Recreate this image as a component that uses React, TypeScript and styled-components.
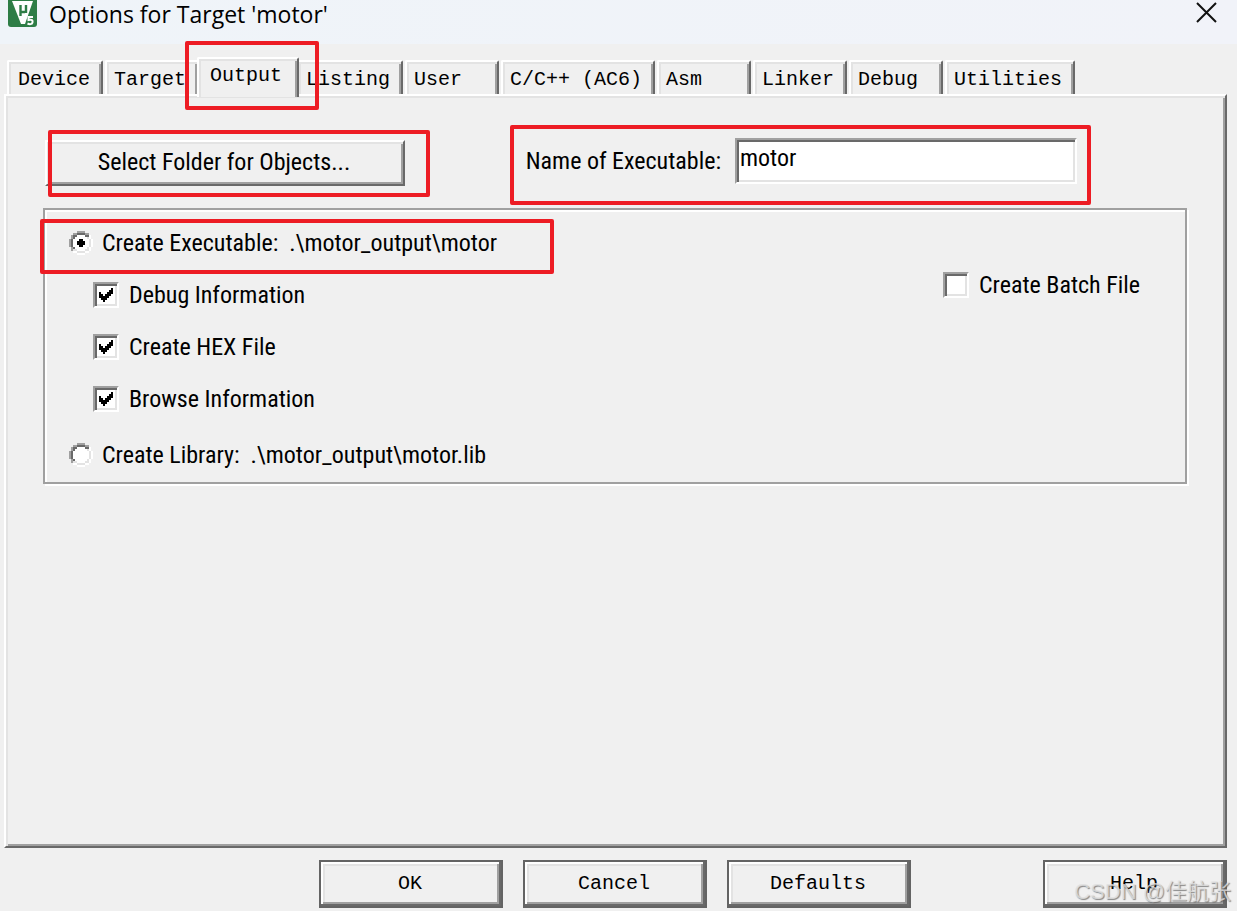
import React, { useId, useState } from "react";
import styled, { createGlobalStyle, css } from "styled-components";

const face = "#f0f0f0";
const white = "#ffffff";
const light = "#e3e3e3";
const mid = "#a0a0a0";
const dark = "#696969";
const red = "#ed1c24";

const GlobalStyle = createGlobalStyle`
  *, *::before, *::after { box-sizing: border-box; }
  body { margin: 0; background: ${face}; color: #000; }
  button, input { font: inherit; color: inherit; border-radius: 0; margin: 0; }
`;

const dialogFont = css`
  font-family: "Roboto Condensed", "Liberation Sans", sans-serif;
  font-size: 24px;
  line-height: 28px;
`;

const monoFont = css`
  font-family: "Liberation Mono", "Noto Sans CJK SC", monospace;
  font-size: 20px;
  line-height: 24px;
`;

const raised = css`
  border: 2px solid;
  border-color: ${white} ${dark} ${dark} ${white};
  box-shadow: inset 2px 2px 0 ${light}, inset -2px -2px 0 ${mid};
`;

const sunken = css`
  border: 2px solid;
  border-color: ${mid} ${white} ${white} ${mid};
  box-shadow: inset 2px 2px 0 ${dark}, inset -2px -2px 0 ${light};
`;

const Window = styled.div`
  position: relative;
  display: flex;
  flex-direction: column;
  min-height: 100vh;
  background: ${face};
`;

const TitleBar = styled.header`
  display: flex;
  align-items: flex-start;
  height: 44px;
  padding: 0 20px 0 8px;
  background: linear-gradient(90deg, #eff4f9, #f1f3f9);
`;

const Title = styled.h1`
  flex: 1;
  margin: 0 0 0 12px;
  font: 400 23px/28px "Open Sans", "Noto Sans", sans-serif;
`;

const CloseButton = styled.button`
  display: flex;
  padding: 2px 0 0;
  border: 0;
  background: none;
`;

const Tabs = styled.div`
  display: flex;
  align-items: flex-end;
  gap: 2px;
  height: 50px;
  padding: 0 7px;
`;

const Tab = styled.button<{ $active?: boolean }>`
  ${monoFont}
  flex: none;
  position: relative;
  min-width: 94px;
  height: 34px;
  padding: 4px 11px 0 7px;
  border: 2px solid;
  border-color: ${white} ${dark} transparent ${white};
  border-bottom: 0;
  border-radius: 2px 2px 0 0;
  background: ${face};
  box-shadow: inset 2px 2px 0 ${light}, inset -2px 0 0 ${mid};
  text-align: left;
  white-space: nowrap;

  &:first-child {
    min-width: 96px;
    padding-left: 9px;
  }

  ${({ $active }) =>
    $active &&
    css`
      z-index: 1;
      min-width: 102px;
      height: 40px;
      margin: 0 -4px -3px;
      padding: 0 13px 5px 11px;
    `}
`;

const Highlight = styled.span<{ $inset: string }>`
  position: absolute;
  z-index: 2;
  inset: ${({ $inset }) => $inset};
  border: 4px solid ${red};
  border-radius: 2px;
  pointer-events: none;
`;

const Panel = styled.main`
  ${dialogFont}
  ${raised}
  flex: 1;
  margin: 0 10px 0 4px;
  padding: 42px 38px 40px 37px;
`;

const TopRow = styled.div`
  display: flex;
  align-items: flex-start;
  justify-content: space-between;
  margin-right: 110px;
  margin-left: 2px;
`;

const FolderButton = styled.button`
  ${raised}
  position: relative;
  width: 360px;
  height: 46px;
  margin-top: 2px;
  padding: 0 2px 2px 0;
  background: ${face};
`;

const Field = styled.div`
  position: relative;
  display: flex;
  align-items: center;
  gap: 14px;
`;

const TextInput = styled.input`
  ${sunken}
  width: 342px;
  height: 46px;
  padding: 0 3px 6px;
  background-color: ${white};
  outline: none;
`;

const Group = styled.fieldset`
  display: flex;
  justify-content: space-between;
  min-width: 0;
  margin: 22px 0 0;
  padding: 19px 45px 13px 24px;
  border: 2px solid ${mid};
  box-shadow: 2px 2px 0 ${white}, inset 2px 2px 0 ${white};
`;

const OptionList = styled.div`
  display: flex;
  flex-direction: column;
`;

const SubOptions = styled.div`
  display: flex;
  flex-direction: column;
  gap: 24px;
  padding: 24px 24px 28px;
`;

const BatchOption = styled.div`
  padding-top: 42px;
`;

const Choice = styled.label<{ $gap: number }>`
  position: relative;
  display: flex;
  align-items: center;
  gap: ${({ $gap }) => $gap}px;
  height: 28px;
  white-space: pre;
`;

const Mark = styled.span`
  position: relative;
  display: flex;
  flex: none;

  svg {
    position: absolute;
    inset: 0;
    pointer-events: none;
  }
`;

const CheckInput = styled.input`
  ${sunken}
  appearance: none;
  width: 26px;
  height: 26px;
  background: ${white};
`;

const RadioInput = styled.input`
  appearance: none;
  width: 24px;
  height: 24px;
`;

const Footer = styled.footer`
  display: flex;
  gap: 20px;
  padding: 12px 10px 3px 319px;
`;

const DialogButton = styled.button`
  ${monoFont}
  width: 184px;
  height: 48px;
  padding: 0 2px 0 0;
  border: 2px solid #646464;
  background: ${face};
  box-shadow: inset -2px -2px 0 ${dark}, inset 2px 2px 0 ${white},
    inset -4px -4px 0 ${mid}, inset 4px 4px 0 ${light};

  &:last-child {
    margin-left: auto;
  }
`;

const Watermark = styled.span`
  position: absolute;
  right: 6px;
  bottom: 2px;
  font: 400 22px/34px "Liberation Sans", "Noto Sans CJK SC", sans-serif;
  color: rgba(225, 225, 225, 0.8);
  text-shadow: 1px 1px 1px rgba(90, 90, 90, 0.7);
  pointer-events: none;
`;

const AppIcon = () => (
  <svg width="29" height="28" viewBox="0 0 29 28" aria-hidden="true">
    <rect y="-4" width="29" height="31" rx="3" fill="#2e7d46" />
    <path d="M4 1H25L17 24H13Z" fill="#fff" />
    <path d="M12.500 5V16M12.500 12H17M18 5V13" stroke="#2e7d46" strokeWidth="2.400" fill="none" />
    <path d="M25 17H20.500V20C24 19 25 20.500 24.500 22.500C24 24.500 21.500 24.500 19.500 23.500" stroke="#fff" strokeWidth="2" fill="none" />
  </svg>
);

const radioRows = [
  "....AAAA....",
  "..AADDDDAA..",
  ".ADDWWWWDDW.",
  ".ADWWWWWWEW.",
  "ADWWWWWWWWEW",
  "ADWWWWWWWWEW",
  "ADWWWWWWWWEW",
  "ADWWWWWWWWEW",
  ".ADWWWWWWEW.",
  ".AEEWWWWEEW.",
  "..WWEEEEWW..",
  "....WWWW....",
];
const radioColors: Record<string, string> = { A: mid, D: dark, W: white, E: light };

const RadioArt = ({ on }: { on: boolean }) => (
  <svg width="24" height="24" viewBox="0 0 12 12" shapeRendering="crispEdges" aria-hidden="true">
    {radioRows.flatMap((row, y) =>
      [...row].map((c, x) =>
        c === "." ? null : <rect key={`${x}-${y}`} x={x} y={y} width="1" height="1" fill={radioColors[c]} />
      )
    )}
    {on && <path d="M5 4H7V5H8V7H7V8H5V7H4V5H5Z" />}
  </svg>
);

const CheckArt = () => (
  <svg width="26" height="26" viewBox="0 0 13 13" shapeRendering="crispEdges" aria-hidden="true">
    <path d="M3 5H4V6H5V7H6V6H7V5H8V4H9V3H10V6H9V7H8V8H7V9H6V10H5V9H4V8H3Z" />
  </svg>
);

const CheckOption = ({ label, initial = false }: { label: string; initial?: boolean }) => {
  const [on, setOn] = useState(initial);
  return (
    <Choice $gap={10}>
      <Mark>
        <CheckInput type="checkbox" checked={on} onChange={() => setOn(!on)} />
        {on && <CheckArt />}
      </Mark>
      {label}
    </Choice>
  );
};

interface RadioProps {
  label: string;
  on: boolean;
  onPick: () => void;
  children?: React.ReactNode;
}

const RadioOption = ({ label, on, onPick, children }: RadioProps) => (
  <Choice $gap={9}>
    <Mark>
      <RadioInput type="radio" name="kind" checked={on} onChange={onPick} />
      <RadioArt on={on} />
    </Mark>
    {label}
    {children}
  </Choice>
);

const tabs = ["Device", "Target", "Output", "Listing", "User", "C/C++ (AC6)", "Asm", "Linker", "Debug", "Utilities"];

export default function App() {
  const nameId = useId();
  const [name, setName] = useState("motor");
  const [kind, setKind] = useState("exe");
  return (
    <Window>
      <GlobalStyle />
      <TitleBar>
        <AppIcon />
        <Title>Options for Target 'motor'</Title>
        <CloseButton aria-label="Close">
          <svg width="21" height="21" viewBox="0 0 21 21">
            <path d="M1 1L20 20M20 1L1 20" stroke="#111" strokeWidth="2" />
          </svg>
        </CloseButton>
      </TitleBar>
      <Tabs role="tablist">
        {tabs.map((tab) => (
          <Tab key={tab} role="tab" aria-selected={tab === "Output"} $active={tab === "Output"}>
            {tab}
            {tab === "Output" && <Highlight $inset="-18px -22px -13px -14px" />}
          </Tab>
        ))}
      </Tabs>
      <Panel>
        <TopRow>
          <FolderButton>
            Select Folder for Objects...
            <Highlight $inset="-12px -27px -13px 1px" />
          </FolderButton>
          <Field>
            <label htmlFor={nameId}>Name of Executable:</label>
            <TextInput id={nameId} value={name} onChange={(e) => setName(e.target.value)} />
            <Highlight $inset="-13px -14px -21px -16px" />
          </Field>
        </TopRow>
        <Group>
          <OptionList>
            <RadioOption label={"Create Executable:  .\\motor_output\\motor"} on={kind === "exe"} onPick={() => setKind("exe")}>
              <Highlight $inset="-10px -57px -17px -29px" />
            </RadioOption>
            <SubOptions>
              <CheckOption label="Debug Information" initial />
              <CheckOption label="Create HEX File" initial />
              <CheckOption label="Browse Information" initial />
            </SubOptions>
            <RadioOption label={"Create Library:  .\\motor_output\\motor.lib"} on={kind === "lib"} onPick={() => setKind("lib")} />
          </OptionList>
          <BatchOption>
            <CheckOption label="Create Batch File" />
          </BatchOption>
        </Group>
      </Panel>
      <Footer>
        <DialogButton>OK</DialogButton>
        <DialogButton>Cancel</DialogButton>
        <DialogButton>Defaults</DialogButton>
        <DialogButton>Help</DialogButton>
      </Footer>
      <Watermark>CSDN @佳航张</Watermark>
    </Window>
  );
}
